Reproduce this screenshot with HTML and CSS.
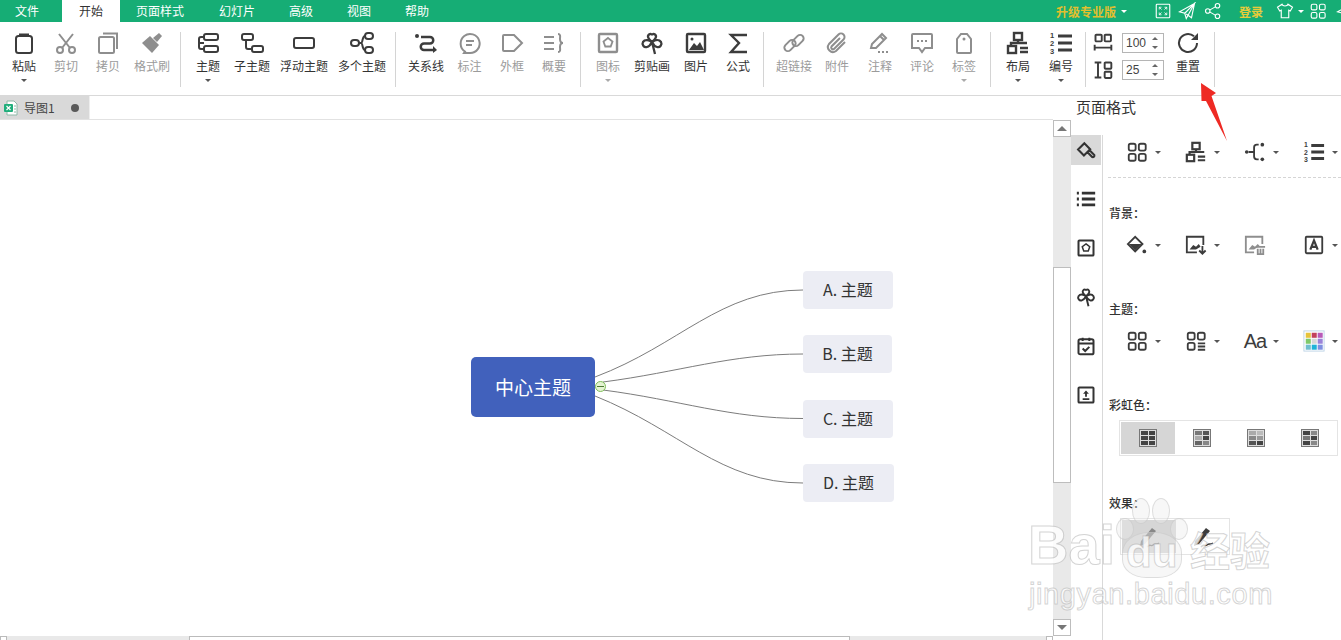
FILE: index.html
```html
<!DOCTYPE html>
<html lang="zh-CN">
<head>
<meta charset="utf-8">
<title>导图1</title>
<link rel="stylesheet" href="styles.css">
</head>
<body>
<svg class="defs" aria-hidden="true">
  <symbol id="i-paste" viewBox="0 0 24 24"><rect x="4" y="5" width="16" height="17" rx="2.5"/><path d="M8 5V3.500h8V5"/></symbol>
  <symbol id="i-cut" viewBox="0 0 24 24"><circle cx="6" cy="19" r="3"/><circle cx="18" cy="19" r="3"/><path d="M8 17 19 3M16 17 5 3"/></symbol>
  <symbol id="i-copy" viewBox="0 0 24 24"><rect x="3" y="6" width="15" height="16" rx="1.500"/><path d="M7 2.500h14V18"/></symbol>
  <symbol id="i-brush" viewBox="0 0 24 24"><path class="fl" d="M2 12 10 5l9 9-7 8z"/><path class="fl" d="m13 7 6-5 3 3-5 6z"/></symbol>
  <symbol id="i-roller" viewBox="0 0 24 24"><path stroke-width="2.500" d="M2.500 11.500 10 4l7 7-7.500 7.500zM13.500 14.500l6 6a2 2 0 0 0 2.500-2.500l-6-6"/></symbol>
  <symbol id="i-topic" viewBox="0 0 24 24"><rect x="8" y="3" width="14" height="6" rx="2"/><rect x="8" y="15" width="14" height="6" rx="2"/><path d="M8 6H5a2 2 0 0 0-2 2v8a2 2 0 0 0 2 2h3M3 12h5"/></symbol>
  <symbol id="i-sub" viewBox="0 0 24 24"><rect x="2" y="3" width="11" height="6" rx="2"/><rect x="12" y="15" width="11" height="6" rx="2"/><path d="M6 9v7a2 2 0 0 0 2 2h4"/></symbol>
  <symbol id="i-float" viewBox="0 0 24 24"><rect x="2" y="7" width="20" height="10" rx="2"/></symbol>
  <symbol id="i-multi" viewBox="0 0 24 24"><rect x="1" y="9" width="8" height="6" rx="3"/><rect x="15" y="2" width="8" height="6" rx="3"/><rect x="15" y="16" width="8" height="6" rx="3"/><path d="M9 12h2c2 0 1-7 4-7M11 12c2 0 1 7 4 7"/></symbol>
  <symbol id="i-rel" viewBox="0 0 24 24"><circle class="fl" cx="3" cy="5" r="2"/><path stroke-width="2.500" d="M7 6h9a3 3 0 0 1 0 6.500h-6a3 3 0 0 0 0 6.500h9"/><path class="fl" d="m19 15 4 4-4 3z"/></symbol>
  <symbol id="i-call" viewBox="0 0 24 24"><path d="M7 20.500A9.500 9.500 0 1 1 12 22H6z"/><path d="M8 10h8M8 14h6"/></symbol>
  <symbol id="i-bound" viewBox="0 0 24 24"><path d="M3 5a1 1 0 0 1 1-1h10l8 8-8 8H4a1 1 0 0 1-1-1z"/></symbol>
  <symbol id="i-sum" viewBox="0 0 24 24"><path d="M2 6h10M2 12h10M2 18h10M16 3c3 0 2 3 2 5s0 4 3 4c-3 0-3 2-3 4s1 5-2 5"/></symbol>
  <symbol id="i-icon" viewBox="0 0 24 24"><rect x="3" y="3" width="18" height="18" rx="1" stroke-width="2.400"/><path stroke-width="1.800" d="m12 7 4.500 3.500-1.800 5H9.300l-1.800-5z"/></symbol>
  <symbol id="i-clover" viewBox="0 0 24 24"><path stroke-width="2.300" d="M12 11C8 8 7 5 9 3.500c1.500-1 3-.5 3 1 0-1.500 1.500-2 3-1 2 1.500 1 4.500-3 7.500zM12 11c-3-2-7-3-9 0-1.500 2.500 1 6 4 5 2-.5 4-3 5-5zM12 11c3-2 7-3 9 0 1.500 2.500-1 6-4 5-2-.5-4-3-5-5zM12 11l3 12"/></symbol>
  <symbol id="i-image" viewBox="0 0 24 24"><rect x="3" y="3" width="18" height="18" rx="1" stroke-width="2.400"/><path class="fl" d="M5 19l5-7 3 3 3-4 4 8z"/><circle class="fl" cx="8" cy="8" r="1.500"/></symbol>
  <symbol id="i-sigma" viewBox="0 0 24 24"><path stroke-width="2.400" d="M21 4H5l8 8-8 9h16"/></symbol>
  <symbol id="i-link" viewBox="0 0 24 24"><rect x="1.500" y="11" width="13" height="7" rx="3.500" transform="rotate(-45 8 14.500)"/><rect x="9.500" y="6" width="13" height="7" rx="3.500" transform="rotate(-45 16 9.500)"/></symbol>
  <symbol id="i-attach" viewBox="0 0 24 24"><path d="M20 11 11 20a5 5 0 0 1-7-7L13.500 3.500a3.500 3.500 0 0 1 5 5L9 18a1.800 1.800 0 0 1-2.500-2.500L15 7"/></symbol>
  <symbol id="i-note" viewBox="0 0 24 24"><path d="M3 17l1-4L14 3l4 4L8 17zM12 5l4 4"/><path stroke-dasharray="2 2" d="M10 21h12"/></symbol>
  <symbol id="i-comment" viewBox="0 0 24 24"><path d="M3 3h18a1 1 0 0 1 1 1v13h-7l-3 4-3-4H2V4a1 1 0 0 1 1-1z"/><path stroke-dasharray="2 2" d="M7 10h10"/></symbol>
  <symbol id="i-tag" viewBox="0 0 24 24"><path d="M5 8l4-5h6l4 5v13a1 1 0 0 1-1 1H6a1 1 0 0 1-1-1z"/><circle class="fl" cx="12" cy="8" r="1.500"/></symbol>
  <symbol id="i-layout" viewBox="0 0 24 24"><rect x="8" y="2" width="8" height="7" stroke-width="2.400"/><rect x="2" y="15" width="8" height="7" stroke-width="2.400"/><path stroke-width="2.400" d="M12 9v3M5 15v-3h16M14 17h8M14 21h8"/></symbol>
  <symbol id="i-gaph" viewBox="0 0 24 24"><rect x="3" y="2" width="7.500" height="8" rx="1" stroke-width="2.300"/><rect x="14" y="2" width="7.500" height="8" rx="1" stroke-width="2.300"/><path stroke-width="2.300" d="M2 14v7M22 14v7M2 17.500h20"/></symbol>
  <symbol id="i-gapv" viewBox="0 0 24 24"><path stroke-width="2.300" d="M2 3h8M2 21h8M6 3v18"/><rect x="14" y="3" width="8" height="7.500" rx="1" stroke-width="2.300"/><rect x="14" y="14" width="8" height="7.500" rx="1" stroke-width="2.300"/></symbol>
  <symbol id="i-reset" viewBox="0 0 24 24"><path d="M21 12a9 9 0 1 1-3-6.700"/><path class="fl" d="M22 2v7h-7z"/></symbol>
  <symbol id="i-expand" viewBox="0 0 24 24"><rect x="3" y="3" width="18" height="18" rx="1"/><path stroke-width="1.100" d="M7 10V7h3M14 7h3v3M17 14v3h-3M10 17H7v-3M7 7l3 3M17 7l-3 3M17 17l-3-3M7 17l3-3"/></symbol>
  <symbol id="i-send" viewBox="0 0 24 24"><path d="M22 2 2 13l7 2 2 7zM9 15 22 2l-4 19-7-5"/></symbol>
  <symbol id="i-share" viewBox="0 0 24 24"><circle cx="5" cy="12" r="3"/><circle cx="18" cy="5" r="3"/><circle cx="18" cy="19" r="3"/><path d="M8 10.500 15 6.500M8 13.500l7 4"/></symbol>
  <symbol id="i-shirt" viewBox="0 0 24 24"><path d="M8 3 2 7l3 5 2-1v10h10V11l2 1 3-5-6-4c-1 3-7 3-8 0z"/></symbol>
  <symbol id="i-grid" viewBox="0 0 24 24"><rect x="3" y="3" width="7.500" height="7.500" rx="2"/><rect x="14" y="3" width="7.500" height="7.500" rx="2"/><rect x="3" y="14" width="7.500" height="7.500" rx="2"/><rect x="14" y="14" width="7.500" height="7.500" rx="2"/></symbol>
  <symbol id="i-gridl" viewBox="0 0 24 24"><rect x="3" y="3" width="7.500" height="7.500" rx="2"/><rect x="14" y="3" width="7.500" height="7.500" rx="2"/><rect x="3" y="14" width="7.500" height="7.500" rx="2"/><path d="M14 14.500h8M14 18h8M14 21.500h8"/></symbol>
  <symbol id="i-conn" viewBox="0 0 24 24"><circle class="fl" cx="3" cy="12" r="2"/><circle class="fl" cx="20" cy="4" r="2"/><circle class="fl" cx="20" cy="20" r="2"/><path d="M5 12h5M16 4h-2a3 3 0 0 0-3 3v10a3 3 0 0 0 3 3h2"/></symbol>
  <symbol id="i-bucket" viewBox="0 0 24 24"><path d="M2 11 10 3l8 8-8 8z"/><path class="fl" d="M3 11h14l-7 7z"/><circle class="fl" cx="20" cy="19" r="2"/></symbol>
  <symbol id="i-imgdown" viewBox="0 0 24 24"><path d="M13 20H2V3h18v9"/><path class="fl" d="M5 17l4-5 3 2 3-3 2 3-5 3z"/><path d="M19 13v8M15.500 18l3.500 3.500 3.500-3.500"/></symbol>
  <symbol id="i-imgdel" viewBox="0 0 24 24"><path d="M11 20H2V3h18v8"/><path class="fl" d="M5 17l4-5 3 2 3-3 2 2-6 4z"/><path d="M13 14h10M15 16v6h6v-6M18 16v6"/></symbol>
  <symbol id="i-abox" viewBox="0 0 24 24"><rect x="3" y="3" width="18" height="18" rx="1"/><path stroke-width="2.400" d="M8 17l4-10 4 10M9.500 14h5"/></symbol>
  <symbol id="i-list" viewBox="0 0 24 24"><path stroke-width="3.400" d="M7 5h16M7 12h16M7 19h16M1 5h2.500M1 12h2.500M1 19h2.500"/></symbol>
  <symbol id="i-cal" viewBox="0 0 24 24"><rect x="3" y="4" width="18" height="18" rx="2" stroke-width="2.400"/><path stroke-width="2.400" d="M3 9h18M8 2v4M16 2v4M8 15l3 3 5-5"/></symbol>
  <symbol id="i-up" viewBox="0 0 24 24"><rect x="3" y="3" width="18" height="18" rx="1" stroke-width="2.400"/><path stroke-width="2.200" d="M8 17h8M12 14V8"/><path class="fl" d="m8.500 10.500 3.500-4 3.500 4z"/></symbol>
  <symbol id="i-pen" viewBox="0 0 24 24"><path class="fl" d="M4 16 15 3l4 3L8 19l-5 2z"/><path stroke-width="1.300" d="M10 22c3-4 4 0 6-2s3 0 6-2"/></symbol>
  <symbol id="i-palette" viewBox="0 0 24 24"><rect class="pal-frame" x="1" y="1" width="22" height="22"/><rect class="c1" x="3" y="3" width="5.500" height="5.500"/><rect class="c2" x="9.500" y="3" width="5.500" height="5.500"/><rect class="c3" x="16" y="3" width="5.500" height="5.500"/><rect class="c4" x="3" y="9.500" width="5.500" height="5.500"/><rect class="c5" x="9.500" y="9.500" width="5.500" height="5.500"/><rect class="c6" x="16" y="9.500" width="5.500" height="5.500"/><rect class="c7" x="3" y="16" width="5.500" height="5.500"/><rect class="c8" x="9.500" y="16" width="5.500" height="5.500"/><rect class="c9" x="16" y="16" width="5.500" height="5.500"/></symbol>
</svg>

<header class="menubar">
  <nav class="menu">
    <span class="menu-item first">文件</span>
    <span class="menu-item w58 active">开始</span>
    <span class="menu-item w80">页面样式</span>
    <span class="menu-item w74">幻灯片</span>
    <span class="menu-item w54">高级</span>
    <span class="menu-item w62">视图</span>
    <span class="menu-item w54">帮助</span>
  </nav>
  <div class="menu-right">
    <span class="upgrade">升级专业版</span><i class="caret white upgrade-caret"></i>
    <svg class="top-ico t-expand"><use href="#i-expand"/></svg>
    <svg class="top-ico t-send"><use href="#i-send"/></svg>
    <svg class="top-ico t-share"><use href="#i-share"/></svg>
    <span class="login">登录</span>
    <svg class="top-ico t-shirt"><use href="#i-shirt"/></svg><i class="caret white shirt-caret"></i>
    <svg class="top-ico t-grid"><use href="#i-grid"/></svg>
    <svg class="top-ico t-last"><use href="#i-send"/></svg>
  </div>
</header>

<section class="toolbar">
  <div class="group g1">
    <div class="tool"><svg class="ico"><use href="#i-paste"/></svg><span>粘贴</span><i class="caret"></i></div>
    <div class="tool off"><svg class="ico"><use href="#i-cut"/></svg><span>剪切</span></div>
    <div class="tool off"><svg class="ico"><use href="#i-copy"/></svg><span>拷贝</span></div>
    <div class="tool off w46"><svg class="ico"><use href="#i-brush"/></svg><span>格式刷</span></div>
  </div>
  <div class="group g2">
    <div class="tool"><svg class="ico"><use href="#i-topic"/></svg><span>主题</span><i class="caret"></i></div>
    <div class="tool w46"><svg class="ico"><use href="#i-sub"/></svg><span>子主题</span></div>
    <div class="tool w58"><svg class="ico"><use href="#i-float"/></svg><span>浮动主题</span></div>
    <div class="tool w58"><svg class="ico"><use href="#i-multi"/></svg><span>多个主题</span></div>
  </div>
  <div class="group g3">
    <div class="tool w44"><svg class="ico"><use href="#i-rel"/></svg><span>关系线</span></div>
    <div class="tool off w43"><svg class="ico"><use href="#i-call"/></svg><span>标注</span></div>
    <div class="tool off"><svg class="ico"><use href="#i-bound"/></svg><span>外框</span></div>
    <div class="tool off"><svg class="ico"><use href="#i-sum"/></svg><span>概要</span></div>
  </div>
  <div class="group g4">
    <div class="tool off"><svg class="ico"><use href="#i-icon"/></svg><span>图标</span><i class="caret"></i></div>
    <div class="tool w46"><svg class="ico"><use href="#i-clover"/></svg><span>剪贴画</span></div>
    <div class="tool"><svg class="ico"><use href="#i-image"/></svg><span>图片</span></div>
    <div class="tool"><svg class="ico"><use href="#i-sigma"/></svg><span>公式</span></div>
  </div>
  <div class="group g5">
    <div class="tool off"><svg class="ico"><use href="#i-link"/></svg><span>超链接</span></div>
    <div class="tool off w44"><svg class="ico"><use href="#i-attach"/></svg><span>附件</span></div>
    <div class="tool off"><svg class="ico"><use href="#i-note"/></svg><span>注释</span></div>
    <div class="tool off"><svg class="ico"><use href="#i-comment"/></svg><span>评论</span></div>
    <div class="tool off"><svg class="ico"><use href="#i-tag"/></svg><span>标签</span><i class="caret"></i></div>
  </div>
  <div class="group g6">
    <div class="tool"><svg class="ico"><use href="#i-layout"/></svg><span>布局</span><i class="caret"></i></div>
    <div class="tool w44">
      <svg class="ico" viewBox="0 0 24 24"><path stroke-width="3.200" d="M9 5h14M9 12h14M9 19h14"/><text class="mini" x="1" y="7">1</text><text class="mini" x="1" y="15">2</text><text class="mini" x="1" y="23">3</text></svg>
      <span>编号</span><i class="caret"></i>
    </div>
  </div>
  <div class="group g7">
    <div class="spacing">
      <div class="spin-row"><svg class="spin-ico"><use href="#i-gaph"/></svg><div class="spin"><span>100</span><b class="arrows"><i></i><i></i></b></div></div>
      <div class="spin-row"><svg class="spin-ico"><use href="#i-gapv"/></svg><div class="spin"><span>25</span><b class="arrows"><i></i><i></i></b></div></div>
    </div>
    <div class="tool reset"><svg class="ico"><use href="#i-reset"/></svg><span>重置</span></div>
  </div>
</section>

<main class="workspace">
  <div class="main">
    <div class="tabs">
      <div class="tab">
        <svg class="tab-ico" viewBox="0 0 14 16"><path class="doc" d="M3 1h7l3 3v11H3z"/><path class="doc-l" d="M10 6h2M10 9h2M10 12h2"/><rect class="doc-x" x="0" y="4" width="9" height="8" rx="1"/><path class="doc-m" d="M2.500 6l4 4M6.500 6l-4 4"/></svg>
        <span>导图1</span>
        <i class="tab-dot"></i>
      </div>
    </div>
    <div class="body">
      <div class="canvas">
        <svg class="links" viewBox="0 0 1053 516">
          <path d="M595 257C680 225 720 170 803 170"/>
          <path d="M603 262C680 252 730 234 803 234"/>
          <path d="M603 270C680 280 730 298.500 803 298.500"/>
          <path d="M595 276C680 310 720 363 803 363"/>
        </svg>
        <div class="node root">中心主题</div>
        <i class="fold"></i>
        <div class="node n-a">A. 主题</div>
        <div class="node n-b">B. 主题</div>
        <div class="node n-c">C. 主题</div>
        <div class="node n-d">D. 主题</div>
      </div>
      <div class="vscroll">
        <i class="sb-btn"><i class="tri-up"></i></i>
        <i class="sb-track t1"></i>
        <i class="sb-thumb"></i>
        <i class="sb-track t2"></i>
        <i class="sb-btn"><i class="tri-down"></i></i>
      </div>
    </div>
    <div class="hscroll">
      <i class="hs-btn"></i>
      <i class="hs-track h1"></i>
      <i class="hs-thumb"></i>
      <i class="hs-track h2"></i>
      <i class="hs-btn"></i>
    </div>
  </div>

  <aside class="right">
    <h2 class="right-title">页面格式</h2>
    <div class="right-body">
      <div class="side">
        <div class="side-item on"><svg class="side-ico"><use href="#i-roller"/></svg></div>
        <div class="side-item"><svg class="side-ico"><use href="#i-list"/></svg></div>
        <div class="side-item"><svg class="side-ico"><use href="#i-icon"/></svg></div>
        <div class="side-item"><svg class="side-ico"><use href="#i-clover"/></svg></div>
        <div class="side-item"><svg class="side-ico"><use href="#i-cal"/></svg></div>
        <div class="side-item"><svg class="side-ico"><use href="#i-up"/></svg></div>
      </div>
      <div class="panel">
        <div class="row">
          <div class="cell"><svg class="ico"><use href="#i-grid"/></svg><i class="caret"></i></div>
          <div class="cell"><svg class="ico"><use href="#i-layout"/></svg><i class="caret"></i></div>
          <div class="cell"><svg class="ico"><use href="#i-conn"/></svg><i class="caret"></i></div>
          <div class="cell">
            <svg class="ico" viewBox="0 0 24 24"><path stroke-width="3.200" d="M9 5h14M9 12h14M9 19h14"/><text class="mini" x="1" y="7">1</text><text class="mini" x="1" y="15">2</text><text class="mini" x="1" y="23">3</text></svg>
            <i class="caret"></i>
          </div>
        </div>
        <hr class="dash">
        <h3 class="label first">背景：</h3>
        <div class="row">
          <div class="cell"><svg class="ico"><use href="#i-bucket"/></svg><i class="caret"></i></div>
          <div class="cell"><svg class="ico"><use href="#i-imgdown"/></svg><i class="caret"></i></div>
          <div class="cell off"><svg class="ico"><use href="#i-imgdel"/></svg></div>
          <div class="cell"><svg class="ico"><use href="#i-abox"/></svg><i class="caret"></i></div>
        </div>
        <h3 class="label">主题：</h3>
        <div class="row">
          <div class="cell"><svg class="ico"><use href="#i-grid"/></svg><i class="caret"></i></div>
          <div class="cell"><svg class="ico"><use href="#i-gridl"/></svg><i class="caret"></i></div>
          <div class="cell"><span class="aa">Aa</span><i class="caret"></i></div>
          <div class="cell"><svg class="ico"><use href="#i-palette"/></svg><i class="caret"></i></div>
        </div>
        <h3 class="label">彩虹色：</h3>
        <div class="rainbow">
          <div class="rb on"><div class="sw"><i class="k4"></i><i class="k4"></i><i class="k4"></i><i class="k4"></i><i class="k4"></i><i class="k4"></i></div></div>
          <div class="rb"><div class="sw"><i class="k7"></i><i class="k5"></i><i class="ka"></i><i class="k4"></i><i class="k6"></i><i class="k8"></i></div></div>
          <div class="rb"><div class="sw"><i class="ka"></i><i class="kb"></i><i class="k8"></i><i class="k9"></i><i class="k5"></i><i class="k4"></i></div></div>
          <div class="rb"><div class="sw"><i class="k4"></i><i class="k8"></i><i class="k7"></i><i class="k4"></i><i class="k4"></i><i class="k8"></i></div></div>
        </div>
        <h3 class="label">效果：</h3>
        <div class="effect">
          <div class="rb on"><svg class="ico"><use href="#i-pen"/></svg></div>
          <div class="rb"><svg class="ico"><use href="#i-pen"/></svg></div>
        </div>
      </div>
    </div>
  </aside>
</main>

<svg class="arrow" viewBox="0 0 40 70"><polygon points="3,2 18,12 13.500,15 29,60 8,20 3.500,20"/></svg>

<div class="watermark" aria-hidden="true">
  <div class="wm-top">
    <span class="wm-bai">Bai</span>
    <span class="wm-paw"><i class="p p1"></i><i class="p p2"></i><i class="p p3"></i><i class="p p4"></i><i class="p p5"></i><b>du</b></span>
    <span class="wm-cn">经验</span>
  </div>
  <div class="wm-url">jingyan.baidu.com</div>
</div>
</body>
</html>
```
FILE: styles.css
```css
* { box-sizing: border-box; }
html, body { margin: 0; height: 100%; }
body {
  width: 1341px;
  height: 640px;
  overflow: hidden;
  position: relative;
  background: #fff;
  color: #333;
  font-family: "Noto Sans CJK SC", "Liberation Sans", sans-serif;
  font-size: 12px;
  display: flex;
  flex-direction: column;
}
.defs { position: absolute; width: 0; height: 0; }
i { display: block; font-style: normal; }
svg { fill: none; stroke: currentColor; stroke-width: 2; }
.fl { fill: currentColor; stroke: none; }
.mini { font: 700 7.500px "Liberation Sans", sans-serif; fill: currentColor; stroke: none; }

/* menu */
.menubar {
  height: 22px;
  flex: none;
  background: #16ad75;
  color: #fff;
  display: flex;
  align-items: center;
}
.menu { display: flex; height: 100%; }
.menu-item { display: flex; align-items: center; justify-content: center; line-height: 22px; }
.menu-item.first { width: 62px; padding-right: 8px; }
.menu-item.w54 { width: 54px; }
.menu-item.w58 { width: 58px; }
.menu-item.w62 { width: 62px; }
.menu-item.w74 { width: 74px; }
.menu-item.w80 { width: 80px; }
.menu-item.active { background: #fff; color: #333; }
.menu-right { display: flex; align-items: center; height: 100%; margin-left: 612px; flex: none; }
.upgrade { color: #e3bf2d; font-weight: 700; font-size: 12px; }
.upgrade-caret { margin-left: 5px; }
.login { color: #e8cb3a; font-weight: 700; margin-left: 17px; }
.top-ico { width: 18px; height: 18px; flex: none; stroke-width: 1.500; }
.t-expand { margin-left: 27px; }
.t-send { margin-left: 6px; }
.t-share { margin-left: 8px; }
.t-shirt { margin-left: 13px; }
.shirt-caret { margin-left: 4px; }
.t-grid { margin-left: 5px; }
.t-last { margin-left: 9px; }

/* toolbar */
.toolbar {
  height: 74px;
  flex: none;
  display: flex;
  padding: 9px 0 0 3px;
  border-bottom: 1px solid #d9d9d9;
  align-items: flex-start;
}
.group { display: flex; height: 55px; border-right: 1px solid #d4d4d4; margin-top: 1px; }
.g1 { padding-right: 5px; }
.g2 { padding: 0 4px 0 6px; }
.g3 { padding: 0 5px 0 8px; }
.g4 { padding: 0 4px 0 6px; }
.g5 { padding: 0 5px 0 9px; }
.g6 { padding: 0 2px 0 6px; }
.g7 { padding: 0 5px 0 8px; }
.tool {
  width: 42px;
  display: flex;
  flex-direction: column;
  align-items: center;
  margin-top: -1px;
}
.tool.w43 { width: 43px; }
.tool.w44 { width: 44px; }
.tool.w46 { width: 46px; }
.tool.w58 { width: 58px; }
.tool span { line-height: 16px; margin-top: 3px; white-space: nowrap; font-size: 12px; }
.tool.off { color: #9b9b9b; }
.tool .caret { margin-top: 5px; }
.ico { width: 24px; height: 24px; flex: none; color: #3c3c3c; }
.off .ico { color: #8e8e8e; }
.caret {
  width: 0;
  height: 0;
  flex: none;
  border-left: 3px solid transparent;
  border-right: 3px solid transparent;
  border-top: 3px solid #555;
}
.caret.white { border-top-color: #fff; }
.off .caret { border-top-color: #aaa; }
.spacing { display: flex; flex-direction: column; gap: 7px; margin-top: 1px; }
.spin-row { display: flex; align-items: center; gap: 10px; }
.spin-ico { width: 20px; height: 20px; margin: 0 -1px; color: #3c3c3c; }
.spin {
  width: 42px;
  height: 20px;
  border: 1px solid #b5b5b5;
  display: flex;
  align-items: center;
  justify-content: space-between;
  padding: 0 5px 0 3px;
  font: 12px "Liberation Sans", sans-serif;
  color: #444;
}
.arrows { display: flex; flex-direction: column; gap: 6px; }
.arrows i { width: 0; height: 0; border-left: 3px solid transparent; border-right: 3px solid transparent; }
.arrows i:first-child { border-bottom: 3px solid #666; }
.arrows i:last-child { border-top: 3px solid #666; }
.reset { margin-left: 3px; }

/* workspace */
.workspace { flex: 1; display: flex; min-height: 0; }
.main { width: 1071px; flex: none; display: flex; flex-direction: column; }
.tabs { height: 24px; width: 1053px; flex: none; border-bottom: 1px solid #e2e2e2; display: flex; }
.tab {
  width: 90px;
  background: #d9d9d9;
  border-right: 1px solid #eee;
  display: flex;
  align-items: center;
  padding-left: 4px;
  color: #444;
}
.tab-ico { width: 14px; height: 16px; margin-right: 6px; flex: none; }
.doc { fill: #fff; stroke: #8fb8a8; stroke-width: 1; }
.doc-l { stroke: #8fb8a8; stroke-width: 1; }
.doc-x { fill: #1fae7b; stroke: none; }
.doc-m { stroke: #fff; stroke-width: 1.200; }
.tab span { width: 47px; white-space: nowrap; flex: none; }
.tab-dot { width: 8px; height: 8px; border-radius: 50%; background: #5a5a5a; flex: none; }
.body { flex: 1; display: flex; min-height: 0; }
.canvas { width: 1053px; flex: none; position: relative; }
.links { position: absolute; inset: 0; width: 1053px; height: 516px; }
.links path { fill: none; stroke: #7c7c7c; stroke-width: 1; }
.node {
  position: absolute;
  display: flex;
  align-items: center;
  justify-content: center;
  background: #ecedf4;
  border-radius: 4px;
  height: 38px;
  padding: 0 0 2px 0;
  font-size: 16px;
  color: #333;
}
.root { left: 471px; top: 237px; width: 124px; height: 60px; background: #4161bc; color: #fff; font-size: 19px; border-radius: 5px; }
.n-a { left: 803px; top: 151px; width: 90px; }
.n-b { left: 803px; top: 215px; width: 89px; }
.n-c { left: 803px; top: 280px; width: 90px; }
.n-d { left: 803px; top: 344px; width: 91px; }
.fold {
  position: absolute;
  left: 595px;
  top: 261px;
  width: 11px;
  height: 11px;
  border-radius: 50%;
  background: #e4f3d2;
  border: 1px solid #7fbe5a;
}
.fold::after { content: ""; display: block; height: 1px; background: #4c7a33; margin: 4px 1px 0; }
.vscroll { width: 18px; flex: none; display: flex; flex-direction: column; }
.sb-btn { height: 17px; flex: none; border: 1px solid #bdbdbd; background: #fff; display: flex; align-items: center; justify-content: center; }
.sb-track { background: #e9e9e9; }
.sb-track.t1 { height: 130px; }
.sb-track.t2 { flex: 1; }
.sb-thumb { height: 216px; flex: none; background: #fff; border: 1px solid #bdbdbd; }
.tri-up { width: 0; height: 0; border-left: 5px solid transparent; border-right: 5px solid transparent; border-bottom: 5px solid #777; }
.tri-down { width: 0; height: 0; border-left: 5px solid transparent; border-right: 5px solid transparent; border-top: 5px solid #777; }
.hscroll { height: 4px; width: 1053px; flex: none; display: flex; }
.hs-btn { width: 7px; flex: none; background: #fff; border: 1px solid #bbb; border-bottom: 0; }
.hs-track { background: #e9e9e9; }
.hs-track.h1 { width: 182px; flex: none; }
.hs-track.h2 { flex: 1; }
.hs-thumb { width: 661px; flex: none; background: #fff; border: 1px solid #bbb; border-bottom: 0; }

/* right */
.right { flex: 1; display: flex; flex-direction: column; min-width: 0; }
.right-title { margin: 0; height: 39px; flex: none; padding-left: 5px; font-size: 15px; font-weight: 400; line-height: 22px; color: #333; }
.right-body { flex: 1; display: flex; min-height: 0; }
.side { width: 32px; flex: none; border-right: 1px solid #d9d9d9; display: flex; flex-direction: column; gap: 19px; }
.side-item { width: 30px; height: 30px; display: flex; align-items: center; justify-content: center; flex: none; }
.side-item.on { background: #d9d9d9; }
.side-ico { width: 20px; height: 20px; color: #333; }
.panel { flex: 1; min-width: 0; padding-left: 5px; }
.row { display: flex; height: 34px; }
.cell { width: 59px; flex: none; display: flex; align-items: center; gap: 6px; padding-left: 17px; }
.cell .ico { width: 22px; height: 22px; margin: 0 1px; }
.aa { width: 24px; font: 20px "Liberation Sans", sans-serif; color: #3c3c3c; text-align: center; letter-spacing: -1px; }
.pal-frame { stroke: #bcd3e6; stroke-width: 1; }
.c1, .c2, .c3, .c4, .c5, .c6, .c7, .c8, .c9 { stroke: none; }
.c1 { fill: #e6c33c; }
.c2 { fill: #c2415c; }
.c3 { fill: #b85ab8; }
.c4 { fill: #7fc96a; }
.c5 { fill: #d8d8d8; }
.c6 { fill: #9a82d8; }
.c7 { fill: #6fbfcf; }
.c8 { fill: #1fb3d8; }
.c9 { fill: #7f8fe0; }
.dash { margin: 8px 0 0; border: 0; border-top: 1px dashed #d5d5d5; height: 0; }
.label { margin: 39px 0 7px 1px; font-family: "Noto Sans CJK TC", sans-serif; font-size: 12px; font-weight: 500; line-height: 16px; color: #333; }
.label.first { margin-top: 27px; }
.rainbow {
  width: 219px;
  height: 36px;
  margin-left: 11px;
  border: 1px solid #e4e4e4;
  display: flex;
  padding: 1px;
}
.rb { width: 54px; flex: none; display: flex; align-items: center; justify-content: center; }
.rb.on { background: #d6d6d6; }
.sw { width: 18px; height: 18px; border: 1px solid #777; background: #ddd; padding: 1px; display: grid; grid-template-columns: 1fr 1fr; grid-template-rows: repeat(3, 1fr); gap: 1px; }
.k4 { background: #444; }
.k5 { background: #555; }
.k6 { background: #666; }
.k7 { background: #777; }
.k8 { background: #888; }
.k9 { background: #999; }
.ka { background: #aaa; }
.kb { background: #bbb; }
.effect {
  width: 110px;
  height: 37px;
  margin-left: 12px;
  border: 1px solid #e4e4e4;
  display: flex;
  padding: 1px;
}
.effect .rb.on .ico { color: #888; }

/* overlays */
.arrow { position: absolute; left: 1198px; top: 81px; width: 40px; height: 70px; stroke: none; }
.arrow polygon { fill: #ee2a24; stroke: none; }
.watermark { position: absolute; left: 1028px; top: 496px; width: 250px; pointer-events: none; font-family: "Liberation Sans", sans-serif; }
.wm-top { display: flex; height: 84px; align-items: flex-end; position: relative; }
.wm-bai, .wm-cn, .wm-url, .wm-paw b {
  color: rgba(255, 255, 255, .8);
  -webkit-text-stroke: 1px rgba(170, 170, 170, .5);
}
.wm-bai { font-size: 56px; line-height: 70px; font-weight: 700; width: 88px; }
.wm-paw { position: relative; width: 72px; height: 84px; display: block; }
.wm-paw b { position: absolute; left: 10px; bottom: 4px; font-size: 42px; line-height: 46px; font-weight: 700; }
.p { position: absolute; background: rgba(235, 235, 235, .4); border: 1px solid rgba(190, 190, 190, .45); border-radius: 50%; }
.p1 { left: 0; top: 22px; width: 18px; height: 22px; }
.p2 { left: 16px; top: 2px; width: 18px; height: 26px; }
.p3 { left: 36px; top: 2px; width: 18px; height: 26px; }
.p4 { left: 54px; top: 22px; width: 18px; height: 22px; }
.p5 { left: 6px; top: 36px; width: 60px; height: 46px; border-radius: 45% 45% 40% 40%; }
.wm-cn { font-family: "Noto Sans CJK SC", sans-serif; font-size: 40px; line-height: 62px; font-weight: 700; white-space: nowrap; margin-left: 2px; }
.wm-url { font-size: 29px; line-height: 28px; white-space: nowrap; letter-spacing: .6px; margin-left: 1px; }
```
